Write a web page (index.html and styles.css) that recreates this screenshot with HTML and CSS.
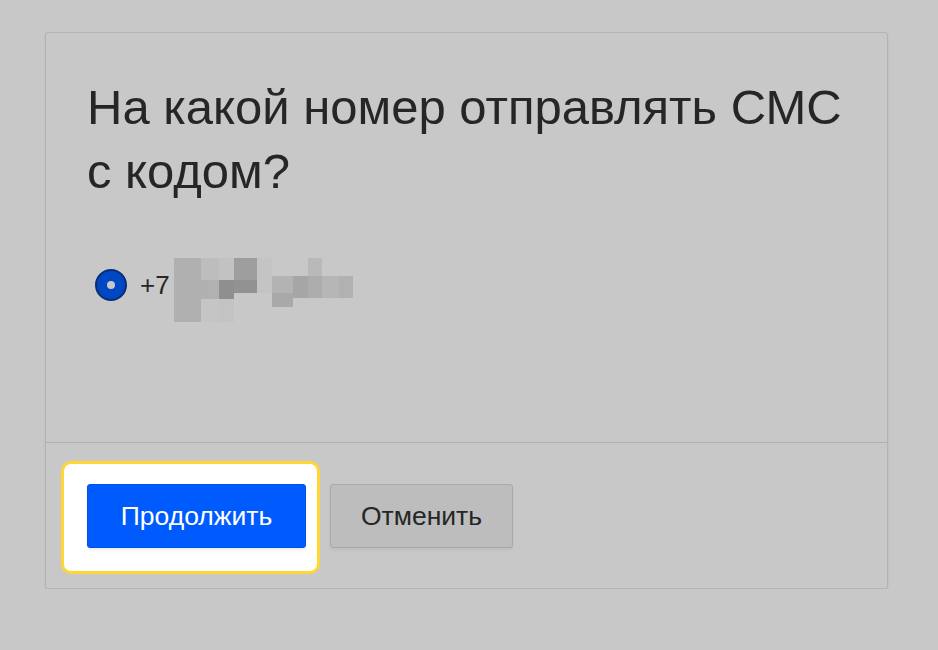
FILE: index.html
```html
<!DOCTYPE html>
<html lang="ru">
<head>
<meta charset="utf-8">
<title>СМС</title>
<link rel="stylesheet" href="styles.css">
</head>
<body>
<div class="card">
  <div class="card-body">
    <h1 class="title">На какой номер отправлять СМС с кодом?</h1>
    <label class="option">
      <span class="radio"><span class="radio-dot"></span></span>
      <span class="phone">+7</span>
      <svg class="masked" width="180" height="65" viewBox="0 0 180 65" aria-hidden="true">
        <rect x="1" y="1" width="27" height="64" fill="#b0b0b0"/>
        <rect x="28" y="1" width="18" height="22" fill="#bdbdbd"/>
        <rect x="28" y="23" width="18" height="19" fill="#b1b1b1"/>
        <rect x="28" y="42" width="18" height="23" fill="#c5c5c5"/>
        <rect x="46" y="1" width="15" height="22" fill="#c2c2c2"/>
        <rect x="46" y="23" width="15" height="19" fill="#8f8f8f"/>
        <rect x="46" y="42" width="15" height="23" fill="#c3c3c3"/>
        <rect x="61" y="1" width="23" height="22" fill="#9e9e9e"/>
        <rect x="61" y="23" width="23" height="13" fill="#929292"/>
        <rect x="84" y="1" width="15" height="35" fill="#c4c4c4"/>
        <rect x="99" y="19" width="21" height="17" fill="#b3b3b3"/>
        <rect x="99" y="36" width="21" height="14" fill="#a9a9a9"/>
        <rect x="120" y="19" width="15" height="22" fill="#a6a6a6"/>
        <rect x="135" y="1" width="14" height="18" fill="#b9b9b9"/>
        <rect x="135" y="19" width="14" height="22" fill="#adadad"/>
        <rect x="149" y="19" width="17" height="22" fill="#b6b6b6"/>
        <rect x="166" y="19" width="14" height="22" fill="#b1b1b1"/>
      </svg>
    </label>
  </div>
  <div class="card-footer">
    <div class="focus-ring">
      <button class="btn btn-primary" type="button">Продолжить</button>
    </div>
    <button class="btn btn-secondary" type="button">Отменить</button>
  </div>
</div>
</body>
</html>
```

FILE: styles.css
```css
html, body {
  margin: 0;
  padding: 0;
  background: #c8c8c8;
}
body {
  padding: 32px 0 0 45px;
  font-family: "Liberation Sans", Arial, Helvetica, sans-serif;
  color: #262626;
}
.card {
  box-sizing: border-box;
  width: 843px;
  height: 557px;
  border: 1px solid #b3b3b3;
  border-radius: 3px;
  background: #c8c8c8;
  box-shadow: 0 2px 3px rgba(0, 0, 0, 0.07);
  display: flex;
  flex-direction: column;
}
.card-body {
  box-sizing: border-box;
  height: 409px;
  flex: none;
  padding: 42px 40px 0 41px;
}
.title {
  margin: 0;
  font-size: 49px;
  line-height: 64px;
  font-weight: 400;
  color: #262626;
  max-width: 770px;
}
.option {
  display: flex;
  align-items: center;
  margin-top: 49px;
  height: 66px;
}
.radio {
  box-sizing: border-box;
  width: 32px;
  height: 32px;
  margin-left: 8px;
  border-radius: 50%;
  background: #0047c4;
  border: 2px solid #0b2d78;
  display: flex;
  align-items: center;
  justify-content: center;
}
.radio-dot {
  width: 8px;
  height: 8px;
  border-radius: 50%;
  background: #c8c8c8;
}
.phone {
  margin-left: 13px;
  font-size: 26px;
  color: #262626;
}
.masked {
  display: block;
  margin-left: 3px;
  margin-top: 9px;
}
.card-footer {
  flex: 1;
  border-top: 1px solid #b0b0b0;
  padding: 18px 15px 0 15px;
  display: flex;
  align-items: flex-start;
}
.focus-ring {
  border: 3px solid #ffd633;
  border-radius: 10px;
  background: #ffffff;
  padding: 20px 11px 23px 23px;
  display: flex;
}
.btn {
  font-family: "Liberation Sans", Arial, Helvetica, sans-serif;
  font-size: 26.5px;
  height: 64px;
  border-radius: 3px;
  cursor: pointer;
}
.btn-primary {
  width: 219px;
  background: #005bff;
  color: #ffffff;
  border: 1px solid #0052e6;
  box-shadow: 0 2px 3px rgba(0, 0, 0, 0.08);
}
.btn-secondary {
  margin-left: 10px;
  margin-top: 23px;
  width: 183px;
  background: #bdbdbd;
  color: #262626;
  border: 1px solid #a9a9a9;
  box-shadow: 0 2px 3px rgba(0, 0, 0, 0.06);
}
```
